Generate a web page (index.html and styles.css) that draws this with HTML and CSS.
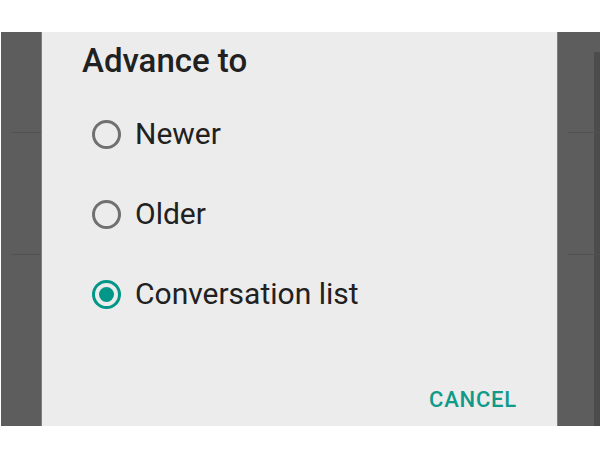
FILE: index.html
```html
<!DOCTYPE html>
<html>
<head>
<meta charset="utf-8">
<link rel="stylesheet" href="styles.css">
</head>
<body>
<div class="screen">
  <div class="band band-left">
    <div class="rule rule-a"></div>
    <div class="rule rule-b"></div>
  </div>
  <div class="dialog">
    <div class="title">Advance to</div>
    <div class="options">
      <div class="option">
        <span class="radio"></span>
        <span class="label">Newer</span>
      </div>
      <div class="option">
        <span class="radio"></span>
        <span class="label">Older</span>
      </div>
      <div class="option">
        <span class="radio checked"></span>
        <span class="label">Conversation list</span>
      </div>
    </div>
    <div class="actions">
      <span class="button">CANCEL</span>
    </div>
  </div>
  <div class="band band-right">
    <div class="rule rule-a"></div>
    <div class="rule rule-b"></div>
    <div class="inner"></div>
  </div>
</div>
</body>
</html>
```

FILE: styles.css
```css
html, body {
  margin: 0;
  padding: 0;
  background: #ffffff;
}

body {
  width: 600px;
  height: 450px;
  overflow: hidden;
  font-family: Roboto, "Liberation Sans", sans-serif;
}

.screen {
  display: flex;
  margin-top: 32px;
  margin-left: 1px;
  height: 394px;
}

.band {
  position: relative;
  background: #5d5d5d;
}

.band-left {
  width: 40px;
  border-right: 1px solid #7e7e7e;
}

.band-right {
  flex: 1;
  border-left: 1px solid #7e7e7e;
  display: flex;
  justify-content: flex-end;
}

.band-right .inner {
  width: 6px;
  margin-top: 20px;
  background: #4c4c4c;
}

.rule {
  position: absolute;
  left: 10px;
  right: 0;
  height: 1px;
  background: #525252;
}

.rule-a { top: 100px; }
.rule-b { top: 222px; }

.dialog {
  width: 515px;
  background: #ececec;
  display: flex;
  flex-direction: column;
}

.title {
  margin-top: 9px;
  padding-left: 40px;
  font-size: 33px;
  font-weight: 500;
  line-height: 40px;
  color: #212121;
}

.options {
  margin-top: 13px;
  display: flex;
  flex-direction: column;
}

.option {
  display: flex;
  align-items: center;
  height: 80px;
  padding-left: 50px;
}

.radio {
  box-sizing: border-box;
  width: 29px;
  height: 29px;
  border: 3px solid #707070;
  border-radius: 50%;
  display: flex;
  align-items: center;
  justify-content: center;
  margin-right: 14px;
}

.radio.checked {
  border-color: #009688;
}

.radio.checked::after {
  content: "";
  width: 15px;
  height: 15px;
  border-radius: 50%;
  background: #009688;
}

.label {
  font-size: 30px;
  line-height: 40px;
  color: #212121;
}

.actions {
  margin-top: auto;
  display: flex;
  justify-content: flex-end;
  padding: 0 40px 12px 0;
}

.button {
  font-size: 22px;
  font-weight: 500;
  line-height: 28px;
  letter-spacing: 0.8px;
  color: #0f9a8a;
}
```
